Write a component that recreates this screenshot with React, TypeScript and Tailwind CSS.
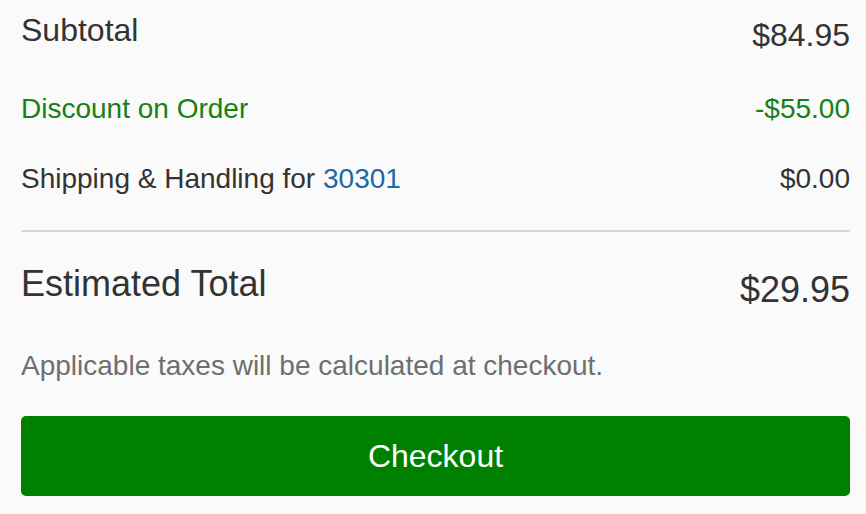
export default function App() {
  return (
    <div
      className="w-[866px] h-[514px] bg-[#fafafa] pl-[21px] pr-[16px] pt-[10px] overflow-hidden"
      style={{ fontFamily: "'Liberation Sans', Arial, sans-serif" }}
    >
      <div className="flex items-start justify-between">
        <span className="text-[32px] leading-[40px] text-[#333333]">Subtotal</span>
        <span className="mt-[5px] text-[32px] leading-[40px] text-[#333333]">$84.95</span>
      </div>
      <div className="mt-[36px] flex items-start justify-between">
        <span className="text-[28px] leading-[36px] text-[#178017]">Discount on Order</span>
        <span className="text-[28px] leading-[36px] text-[#178017]">-$55.00</span>
      </div>
      <div className="mt-[34px] flex items-start justify-between">
        <span className="text-[28px] leading-[36px] text-[#333333]">
          Shipping &amp; Handling for <span className="text-[#1f67a6]">30301</span>
        </span>
        <span className="text-[28px] leading-[36px] text-[#333333]">$0.00</span>
      </div>
      <div className="mt-[33px] h-[2px] bg-[#d8d8d8]" />
      <div className="mt-[30px] flex items-start justify-between">
        <span className="text-[36px] leading-[44px] text-[#333333]">Estimated Total</span>
        <span className="mt-[6px] text-[36px] leading-[44px] text-[#333333]">$29.95</span>
      </div>
      <p className="mt-[36px] text-[28px] leading-[36px] text-[#6f6f6f]">
        Applicable taxes will be calculated at checkout.
      </p>
      <button className="mt-[32px] flex h-[80px] w-full items-center justify-center rounded-[5px] bg-[#008000] text-[32px] leading-[40px] text-white">
        Checkout
      </button>
    </div>
  );
}
